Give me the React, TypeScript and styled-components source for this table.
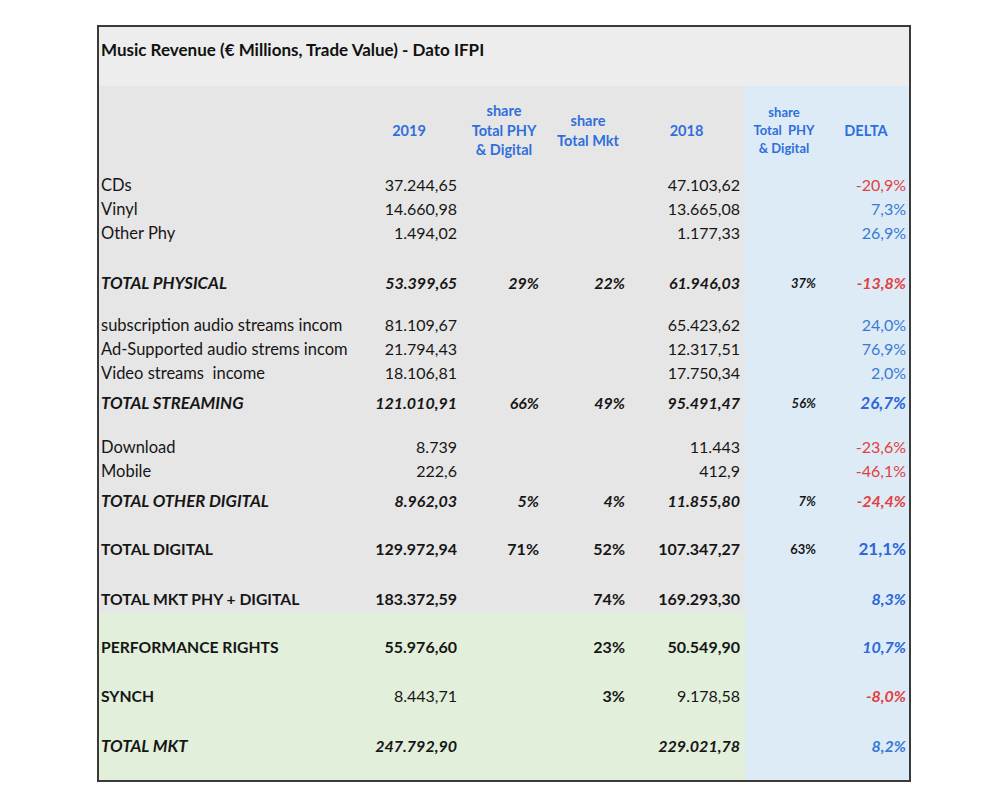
import React from 'react';
import styled, { createGlobalStyle } from 'styled-components';

const Global = createGlobalStyle`
  html, body { margin: 0; padding: 0; background: #ffffff; }
  body { font-family: Lato, "Open Sans", "Liberation Sans", sans-serif; color: #1b1b1b; }
`;

const COLS = '259px 102px 88px 80px 117px 78px 86px';
const PADS = [0, 3, 9, 3, 5, 7, 3];

type Sty = 'n' | 'b' | 'bi';
type Tone = 'ink' | 'red' | 'blue' | 'blueB';

const Sheet = styled.div`
  box-sizing: border-box;
  width: 814px;
  margin: 25px 0 0 97px;
  border: 2px solid #3a3a3a;
  background: #e7e6e6;
`;

const TitleBar = styled.div`
  box-sizing: border-box;
  height: 59px;
  padding: 13px 0 0 2px;
  background: #ededed;
  font-weight: 700;
  font-size: 17px;
  line-height: 20px;
  color: #111;
`;

const Row = styled.div<{ $h: number; $bg?: 'gray' | 'green' }>`
  display: grid;
  grid-template-columns: ${COLS};
  height: ${(p) => p.$h}px;
  background: ${(p) => (p.$bg === 'green' ? '#e2efda' : '#e7e6e6')};
`;

const Cell = styled.div<{ $blue?: boolean; $pr: number; $pt?: number; $align: 'left' | 'right' | 'center' }>`
  box-sizing: border-box;
  display: flex;
  align-items: center;
  justify-content: ${(p) => (p.$align === 'left' ? 'flex-start' : p.$align === 'right' ? 'flex-end' : 'center')};
  padding: ${(p) => p.$pt ?? 0}px ${(p) => p.$pr}px 0 ${(p) => (p.$align === 'left' ? 2 : 0)}px;
  background: ${(p) => (p.$blue ? '#ddebf7' : 'transparent')};
  min-width: 0;
`;

const toneColor: Record<Tone, string> = {
  ink: '#161616',
  red: '#e2403f',
  blue: '#3a7ad4',
  blueB: '#2c66d8',
};

const Txt = styled.span<{ $s: Sty; $size?: number; $tone?: Tone }>`
  font-size: ${(p) => p.$size ?? 16}px;
  line-height: 20px;
  font-weight: ${(p) => (p.$s === 'n' ? 400 : 700)};
  font-style: ${(p) => (p.$s === 'bi' ? 'italic' : 'normal')};
  color: ${(p) => toneColor[p.$tone ?? 'ink']};
  white-space: nowrap;
`;

const HeadRow = styled.div`
  display: grid;
  grid-template-columns: ${COLS};
  height: 87px;
`;

const HeadCell = styled.div<{ $blue?: boolean; $small?: boolean }>`
  display: flex;
  flex-direction: column;
  align-items: center;
  justify-content: center;
  padding-top: ${(p) => (p.$small ? 0 : 2)}px;
  background: ${(p) => (p.$blue ? '#ddebf7' : 'transparent')};
  color: #2f6fdc;
  font-weight: 700;
  font-size: ${(p) => (p.$small ? 13 : 14.5)}px;
  line-height: ${(p) => (p.$small ? 18 : 19.5)}px;
  text-align: center;
  white-space: pre;
`;

interface DataRow {
  label?: string;
  ls?: Sty;
  v19?: string;
  s1?: string;
  s2?: string;
  v18?: string;
  s3?: string;
  d?: string;
  vs?: Sty;
  ss?: Sty;
  s3s?: Sty;
  ds?: Sty;
  dc?: Tone;
  dsize?: number;
  h: number;
  pt?: number;
  bg?: 'gray' | 'green';
}

const rows: DataRow[] = [
  { label: 'CDs', v19: '37.244,65', v18: '47.103,62', d: '-20,9%', dc: 'red', h: 24 },
  { label: 'Vinyl', v19: '14.660,98', v18: '13.665,08', d: '7,3%', dc: 'blue', h: 24 },
  { label: 'Other Phy', v19: '1.494,02', v18: '1.177,33', d: '26,9%', dc: 'blue', h: 24 },
  { h: 26 },
  {
    label: 'TOTAL PHYSICAL', ls: 'bi', v19: '53.399,65', s1: '29%', s2: '22%', v18: '61.946,03', s3: '37%',
    d: '-13,8%', vs: 'bi', ss: 'bi', s3s: 'bi', ds: 'bi', dc: 'red', h: 24,
  },
  { h: 18 },
  { label: 'subscription audio streams incom', v19: '81.109,67', v18: '65.423,62', d: '24,0%', dc: 'blue', h: 24 },
  { label: 'Ad-Supported audio strems incom', v19: '21.794,43', v18: '12.317,51', d: '76,9%', dc: 'blue', h: 24 },
  { label: 'Video streams\u00a0 income', v19: '18.106,81', v18: '17.750,34', d: '2,0%', dc: 'blue', h: 24 },
  {
    label: 'TOTAL STREAMING', ls: 'bi', v19: '121.010,91', s1: '66%', s2: '49%', v18: '95.491,47', s3: '56%',
    d: '26,7%', vs: 'bi', ss: 'bi', s3s: 'bi', ds: 'bi', dc: 'blueB', dsize: 17, h: 36,
  },
  { h: 14 },
  { label: 'Download', v19: '8.739', v18: '11.443', d: '-23,6%', dc: 'red', h: 24 },
  { label: 'Mobile', v19: '222,6', v18: '412,9', d: '-46,1%', dc: 'red', h: 24 },
  {
    label: 'TOTAL OTHER DIGITAL', ls: 'bi', v19: '8.962,03', s1: '5%', s2: '4%', v18: '11.855,80', s3: '7%',
    d: '-24,4%', vs: 'bi', ss: 'bi', s3s: 'bi', ds: 'bi', dc: 'red', h: 36,
  },
  {
    label: 'TOTAL DIGITAL', ls: 'b', v19: '129.972,94', s1: '71%', s2: '52%', v18: '107.347,27', s3: '63%',
    d: '21,1%', vs: 'b', ss: 'b', s3s: 'b', ds: 'b', dc: 'blueB', dsize: 17, h: 60,
  },
  {
    label: 'TOTAL MKT PHY + DIGITAL', ls: 'b', v19: '183.372,59', s2: '74%', v18: '169.293,30',
    d: '8,3%', vs: 'b', ss: 'b', ds: 'bi', dc: 'blueB', h: 34, pt: 6,
  },
  {
    label: 'PERFORMANCE RIGHTS', ls: 'b', v19: '55.976,60', s2: '23%', v18: '50.549,90',
    d: '10,7%', vs: 'b', ss: 'b', ds: 'bi', dc: 'blueB', h: 68, bg: 'green',
  },
  {
    label: 'SYNCH', ls: 'b', v19: '8.443,71', s2: '3%', v18: '9.178,58',
    d: '-8,0%', vs: 'n', ss: 'b', ds: 'bi', dc: 'red', h: 30, bg: 'green',
  },
  {
    label: 'TOTAL MKT', ls: 'bi', v19: '247.792,90', v18: '229.021,78',
    d: '8,2%', vs: 'bi', ds: 'bi', dc: 'blue', h: 69, bg: 'green',
  },
];

const labelSize: Record<Sty, number> = { n: 16.5, b: 15.7, bi: 16.8 };

function DataLine({ r }: { r: DataRow }) {
  const vs = r.vs ?? 'n';
  const ss = r.ss ?? 'n';
  const ls = r.ls ?? 'n';
  const cells: React.ReactNode[] = [
    r.label ? <Txt $s={ls} $size={labelSize[ls]}>{r.label}</Txt> : null,
    r.v19 ? <Txt $s={vs}>{r.v19}</Txt> : null,
    r.s1 ? <Txt $s={ss}>{r.s1}</Txt> : null,
    r.s2 ? <Txt $s={ss}>{r.s2}</Txt> : null,
    r.v18 ? <Txt $s={vs}>{r.v18}</Txt> : null,
    r.s3 ? <Txt $s={r.s3s ?? 'n'} $size={13}>{r.s3}</Txt> : null,
    r.d ? <Txt $s={r.ds ?? 'n'} $tone={r.dc} $size={r.dsize}>{r.d}</Txt> : null,
  ];
  return (
    <Row $h={r.h} $bg={r.bg}>
      {cells.map((c, i) => (
        <Cell key={i} $blue={i >= 5} $pr={PADS[i]} $pt={r.pt} $align={i === 0 ? 'left' : 'right'}>
          {c}
        </Cell>
      ))}
    </Row>
  );
}

export default function App() {
  return (
    <>
      <Global />
      <Sheet>
        <TitleBar>Music Revenue (€ Millions, Trade Value) - Dato IFPI</TitleBar>
        <HeadRow>
          <HeadCell />
          <HeadCell>2019</HeadCell>
          <HeadCell>{'share\nTotal PHY\n& Digital'}</HeadCell>
          <HeadCell>{'share\nTotal Mkt'}</HeadCell>
          <HeadCell>2018</HeadCell>
          <HeadCell $blue $small>{'share\nTotal  PHY\n& Digital'}</HeadCell>
          <HeadCell $blue>DELTA</HeadCell>
        </HeadRow>
        {rows.map((r, i) => (
          <DataLine key={i} r={r} />
        ))}
      </Sheet>
    </>
  );
}
